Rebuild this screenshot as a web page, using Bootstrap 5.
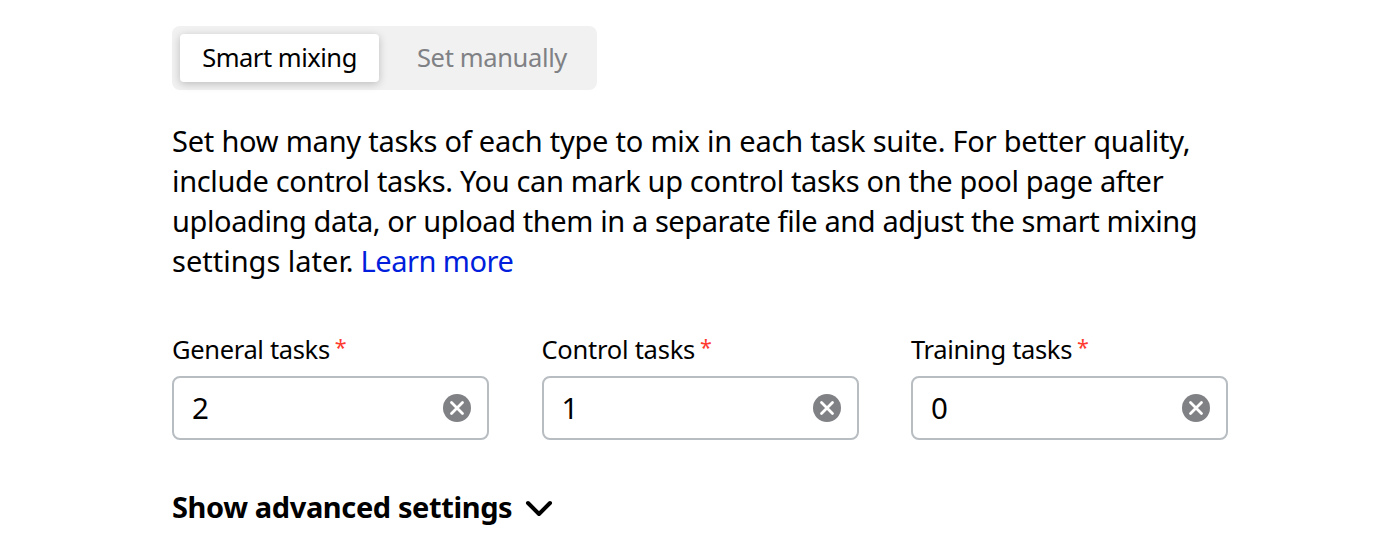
<!DOCTYPE html>
<html lang="en">
<head>
<meta charset="utf-8">
<meta name="viewport" content="width=device-width, initial-scale=1">
<title>Smart mixing</title>
<link href="https://cdn.jsdelivr.net/npm/bootstrap@5.3.0/dist/css/bootstrap.min.css" rel="stylesheet">
<style>
body{font-family:"Noto Sans",sans-serif;color:#000;background:#fff;overflow:hidden}
.mix-panel{width:1056px;margin-left:172px;padding-top:26px}
.switcher{width:425px;height:64px;padding:8px;background:#f1f1f1;border-radius:8px}
.switcher .btn{height:48px;padding:0;border:0;font-size:25.5px;line-height:46px;padding-bottom:2px;color:#808185;white-space:nowrap}
.switcher .btn.active{width:199px;background:#fff;color:#000;border-radius:4px;box-shadow:0 2px 8px rgba(0,0,0,.22);letter-spacing:-.48px}
.switcher .btn-manual{width:210px;padding-left:16px;letter-spacing:-.36px}
.intro{margin-top:31px;font-size:29px;line-height:40px;white-space:nowrap}
.intro-a{letter-spacing:-.225px}
.intro-b{letter-spacing:-.335px}
.intro-c{letter-spacing:-.405px}
.intro a{color:#001edc;letter-spacing:-.5px;margin-left:-.5px}
.mix-fields{--bs-gutter-x:52.5px;margin-top:48px}
.mix-fields label{display:block;height:40px;margin-bottom:7px;font-size:25.5px;line-height:40px;letter-spacing:-.34px;white-space:nowrap}
.req{font-size:21.5px;color:#ff3a2f;margin-left:5px;vertical-align:4px;line-height:1}
.mix-fields .col-4:nth-child(2) label{letter-spacing:-.25px}
.value-box{height:64px;border:2px solid #b8bdc2;border-radius:8px;padding:0 16px 0 18px}
.value-box input{font-size:29.5px;line-height:40px;color:#000;min-width:0}
.value-box svg{width:28px;height:28px;flex:none}
.more{margin-top:47px;height:40px;font-size:29px;line-height:40px;letter-spacing:-.39px;color:#000}
.more svg{width:28px;height:18px;margin:3px 0 0 13px}
</style>
</head>
<body>
<main class="mix-panel">
  <div class="switcher d-flex" role="group">
    <button type="button" class="btn active">Smart mixing</button>
    <button type="button" class="btn btn-manual">Set manually</button>
  </div>
  <p class="intro mb-0">
    <span class="intro-a">Set how many tasks of each type to mix in each task suite. For better quality,</span><br>
    <span class="intro-b">include control tasks. You can mark up control tasks on the pool page after</span><br>
    <span class="intro-c">uploading data, or upload them in a separate file and adjust the smart mixing</span><br>
    settings later. <a href="#" class="text-decoration-none">Learn more</a>
  </p>
  <div class="row mix-fields">
    <div class="col-4">
      <label for="general">General tasks<span class="req">*</span></label>
      <div class="value-box d-flex align-items-center">
        <input id="general" class="form-control-plaintext p-0" value="2">
        <svg viewBox="0 0 28 28"><circle cx="14" cy="14" r="14" fill="#808185"/><path d="M8.500 8.500l11 11M19.500 8.500l-11 11" stroke="#fff" stroke-width="2.800" stroke-linecap="round"/></svg>
      </div>
    </div>
    <div class="col-4">
      <label for="control">Control tasks<span class="req">*</span></label>
      <div class="value-box d-flex align-items-center">
        <input id="control" class="form-control-plaintext p-0" value="1">
        <svg viewBox="0 0 28 28"><circle cx="14" cy="14" r="14" fill="#808185"/><path d="M8.500 8.500l11 11M19.500 8.500l-11 11" stroke="#fff" stroke-width="2.800" stroke-linecap="round"/></svg>
      </div>
    </div>
    <div class="col-4">
      <label for="training">Training tasks<span class="req">*</span></label>
      <div class="value-box d-flex align-items-center">
        <input id="training" class="form-control-plaintext p-0" value="0">
        <svg viewBox="0 0 28 28"><circle cx="14" cy="14" r="14" fill="#808185"/><path d="M8.500 8.500l11 11M19.500 8.500l-11 11" stroke="#fff" stroke-width="2.800" stroke-linecap="round"/></svg>
      </div>
    </div>
  </div>
  <a href="#" class="more d-inline-flex align-items-center fw-bold text-decoration-none">Show advanced settings
    <svg viewBox="0 0 28 18" fill="none"><path d="M3 3l11 11L25 3" stroke="#000" stroke-width="4" stroke-linecap="round" stroke-linejoin="round"/></svg></a>
</main>
<script src="https://cdn.jsdelivr.net/npm/bootstrap@5.3.0/dist/js/bootstrap.bundle.min.js"></script>
</body>
</html>
